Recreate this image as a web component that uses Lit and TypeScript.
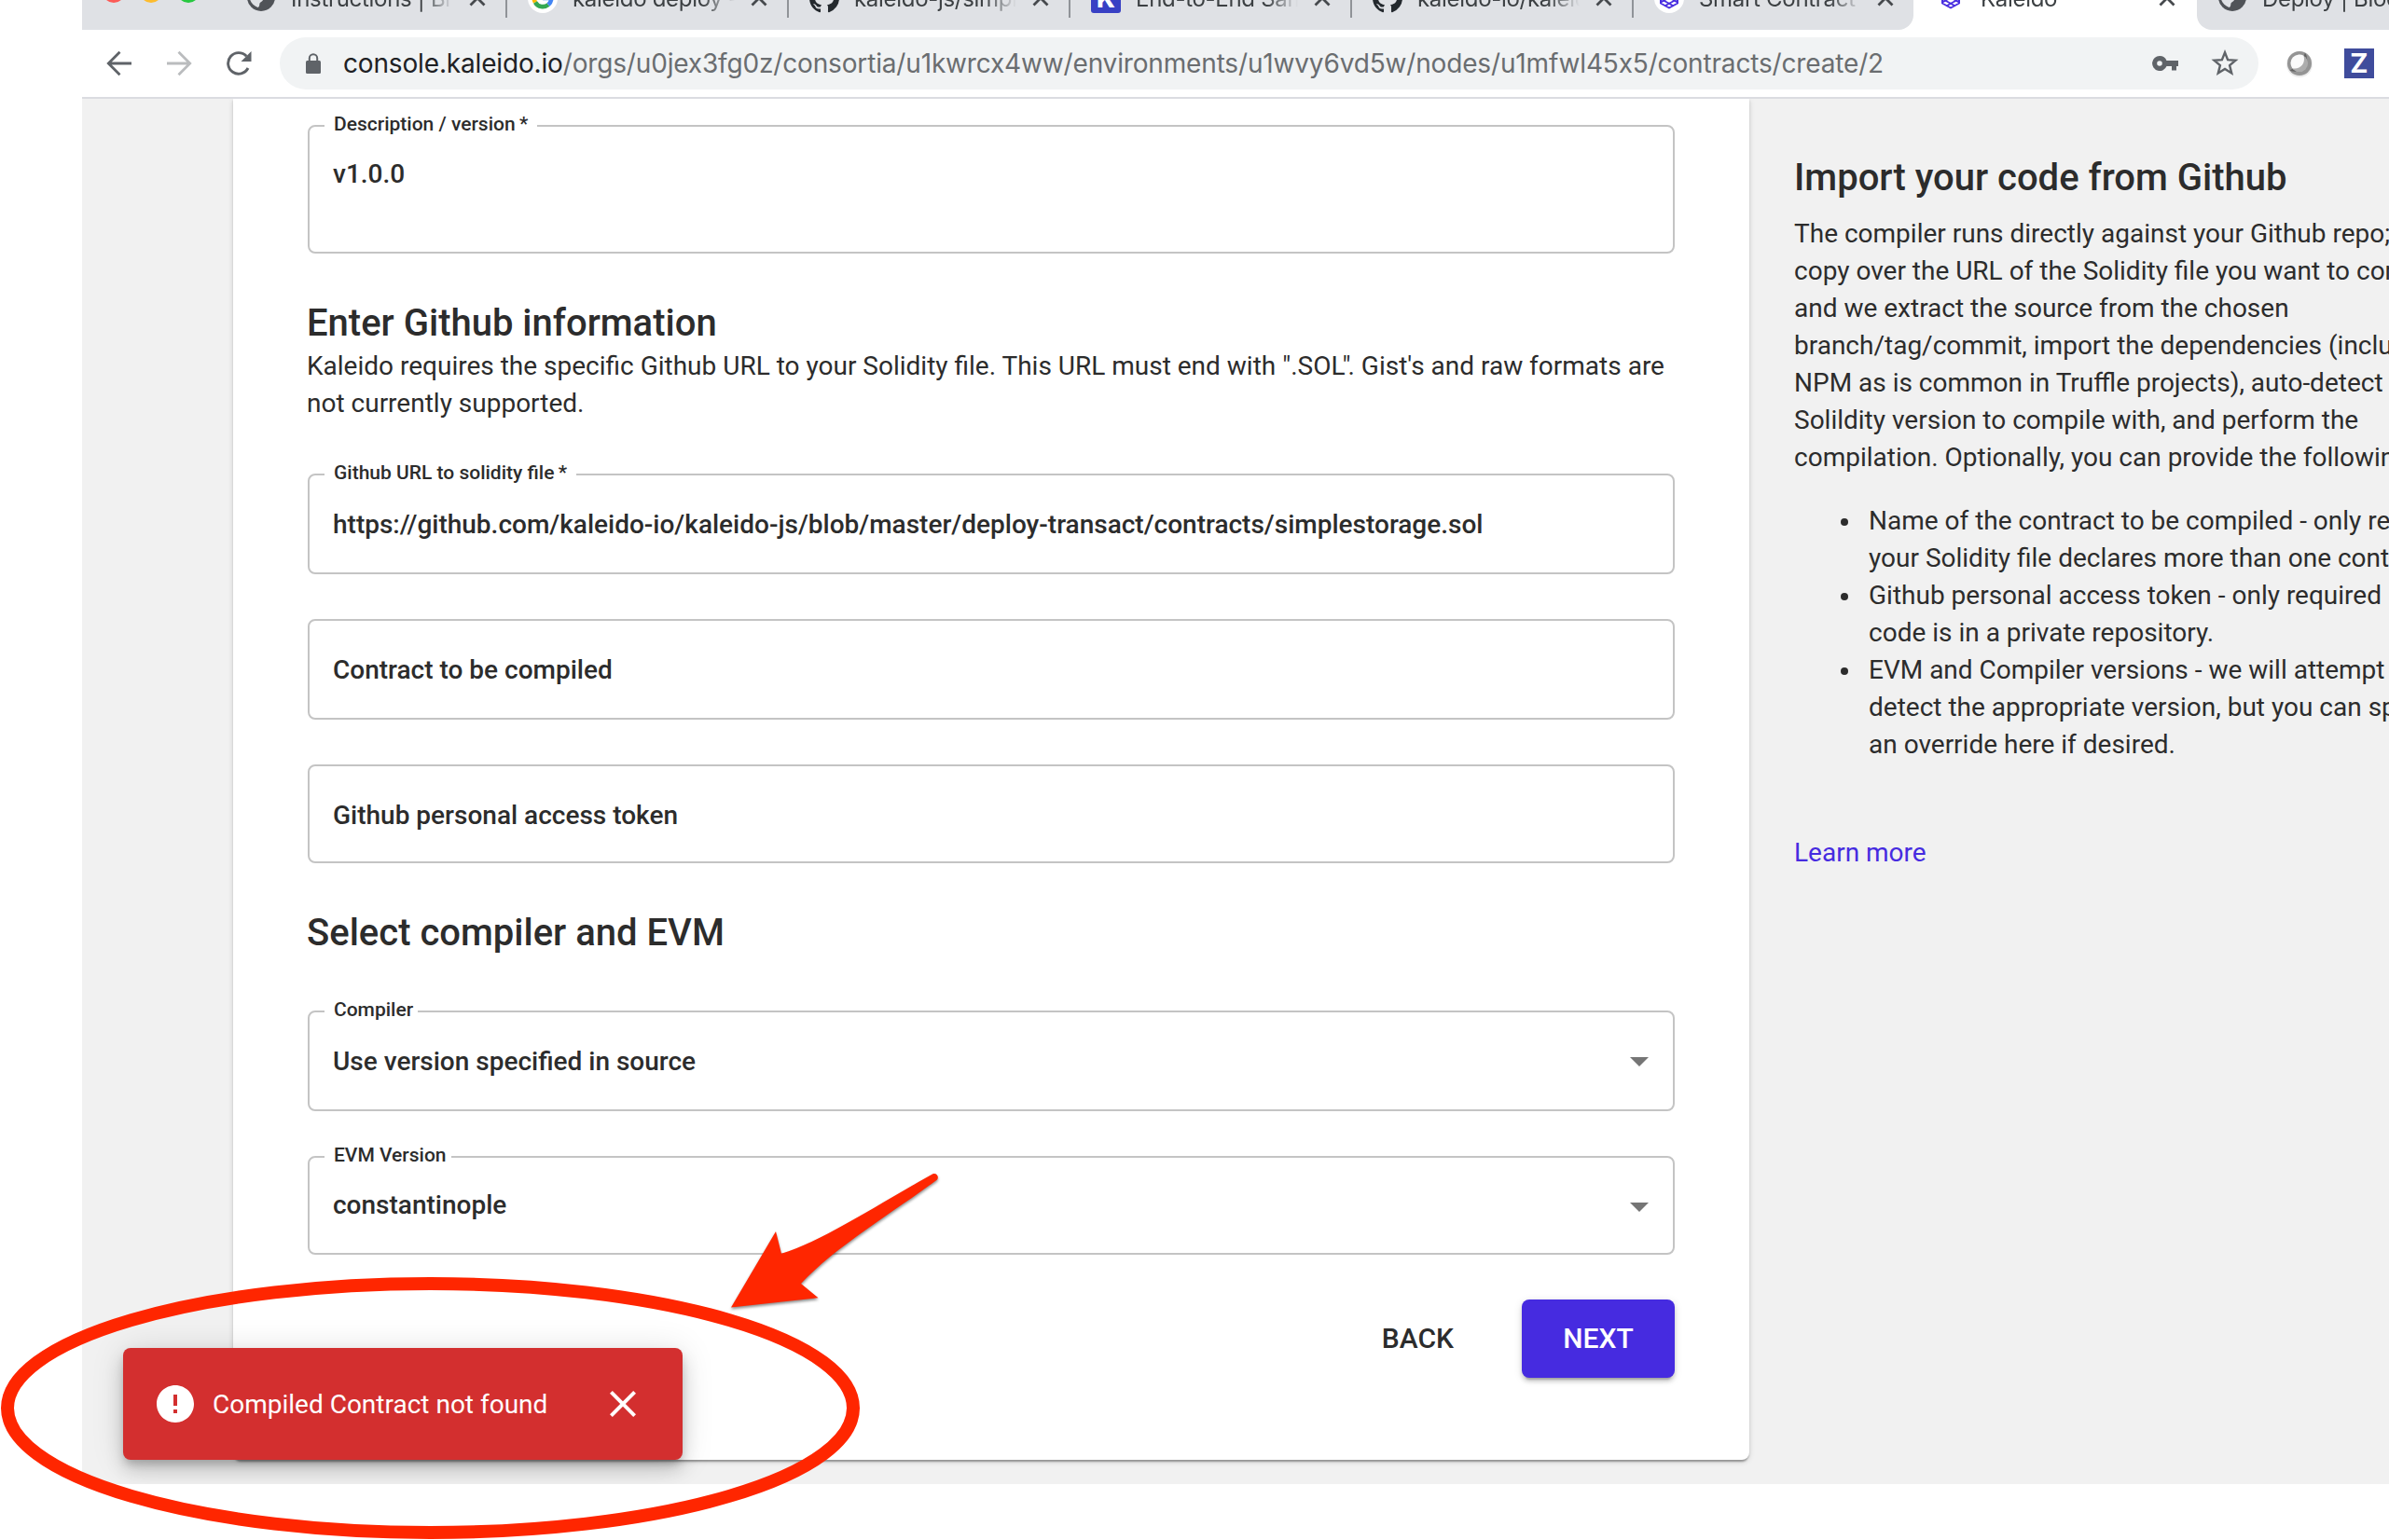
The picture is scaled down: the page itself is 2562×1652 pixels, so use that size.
import { LitElement, html, css, svg, nothing } from "lit";
import { customElement, property } from "lit/decorators.js";
import { classMap } from "lit/directives/class-map.js";

type TabIcon = "globe" | "google" | "github" | "k" | "kaleido" | "kaleidoBadge";

interface Tab {
  icon: TabIcon;
  title: string;
  active?: boolean;
}

const TABS: Tab[] = [
  { icon: "globe", title: "Instructions | Bl" },
  { icon: "google", title: "kaleido deploy -" },
  { icon: "github", title: "kaleido-js/simpl" },
  { icon: "k", title: "End-to-End Sam" },
  { icon: "github", title: "kaleido-io/kaleid" },
  { icon: "kaleidoBadge", title: "Smart Contract" },
  { icon: "kaleido", title: "Kaleido", active: true },
  { icon: "globe", title: "Deploy | Block" },
];

const knot = svg`
  <g fill="none" stroke="#4a2fe0" stroke-width="2" stroke-linejoin="round" stroke-linecap="round">
    <path d="M16 5.500 L25 10.500 V21.500 L16 26.500 L7 21.500 V10.500 Z"/>
    <path d="M11 8.500 V19 L20 24"/>
    <path d="M21 8.500 V19 L12 24"/>
    <path d="M7.500 20 L16 15.500 L24.500 20"/>
  </g>`;

const ICONS: Record<TabIcon, unknown> = {
  globe: svg`
    <circle cx="16" cy="15" r="15" fill="#505358"/>
    <path d="M3.500 11 C8 11 12 12 15 14 C17 15.500 18.500 16 18 18 C17.500 20 15.500 19.500 14.500 21.500 C14 23.500 14.500 25 12.500 26 C7 24 3.500 19 3.500 14 Z M19 3 C25 5 28.500 10 28 16 C26 16.500 25 14 22.500 14.500 C20 15 19 13 19.500 10.500 Z" fill="#dfe1e5"/>`,
  google: svg`
    <circle cx="16" cy="16" r="16" fill="#fff"/>
    <g fill="none" stroke-width="4.600">
      <path d="M22.500 9.500 A9.300 9.300 0 0 0 8 11.500" stroke="#ea4335"/>
      <path d="M8 11.500 A9.300 9.300 0 0 0 8 20.500" stroke="#fbbc05"/>
      <path d="M8 20.500 A9.300 9.300 0 0 0 22 23" stroke="#34a853"/>
      <path d="M22 23 A9.300 9.300 0 0 0 25.300 16 H16" stroke="#4285f4"/>
    </g>`,
  github: svg`
    <path transform="scale(2)" fill="#24292e" d="M8 0C3.580 0 0 3.580 0 8c0 3.540 2.290 6.530 5.470 7.590.4.070.550-.170.550-.380 0-.190-.010-.820-.010-1.490-2.010.370-2.530-.490-2.690-.940-.090-.230-.480-.940-.820-1.130-.280-.150-.680-.520-.010-.530.630-.010 1.080.580 1.230.820.720 1.210 1.870.870 2.330.660.070-.520.280-.870.510-1.070-1.780-.2-3.640-.890-3.640-3.950 0-.870.310-1.590.820-2.150-.080-.2-.360-1.020.080-2.120 0 0 .670-.210 2.200.820.640-.180 1.320-.270 2-.270s1.360.090 2 .270c1.530-1.040 2.200-.820 2.200-.820.440 1.100.160 1.920.080 2.120.510.560.820 1.270.820 2.150 0 3.070-1.870 3.750-3.650 3.950.290.250.540.730.540 1.480 0 1.070-.010 1.930-.010 2.200 0 .210.150.460.550.380A8.010 8.010 0 0 0 16 8c0-4.420-3.580-8-8-8z"/>`,
  k: svg`
    <rect width="32" height="32" rx="3" fill="#3840c4"/>
    <text x="16" y="26" text-anchor="middle" font-family="Inter, sans-serif" font-weight="800" font-size="27" fill="#fff">K</text>`,
  kaleido: knot,
  kaleidoBadge: svg`<circle cx="16" cy="16" r="16" fill="#fff"/>${knot}`,
};

@customElement("browser-tab")
export class BrowserTab extends LitElement {
  @property({ attribute: false }) tab!: Tab;

  static styles = css`
    :host { display: block; flex: none; width: 302px; }
    .tab {
      box-sizing: border-box; height: 68px; display: flex; align-items: center;
      padding-left: 22px; background: #dfe1e5;
    }
    .active { background: #fff; }
    .icon { width: 32px; height: 32px; flex: none; }
    .title {
      margin-left: 16px; padding-top: 1px; width: 177px; overflow: hidden; white-space: nowrap;
      font: 400 24px/32px Inter, sans-serif; letter-spacing: -0.3px; color: #3c4043;
      -webkit-mask-image: linear-gradient(90deg, #000 140px, transparent 174px);
      mask-image: linear-gradient(90deg, #000 140px, transparent 174px);
    }
    .close { width: 22px; height: 22px; margin-left: 12px; flex: none; }
  `;

  render() {
    const t = this.tab;
    return html`
      <div class=${classMap({ tab: true, active: !!t.active })}>
        <svg class="icon" viewBox="0 0 32 32">${ICONS[t.icon]}</svg>
        <span class="title">${t.title}</span>
        <svg class="close" viewBox="0 0 22 22">
          <path d="M3.500 3.500 L18.500 18.500 M18.500 3.500 L3.500 18.500" stroke="#46494d" stroke-width="2.800" fill="none"/>
        </svg>
      </div>`;
  }
}

@customElement("form-field")
export class FormField extends LitElement {
  @property() label = "";
  @property() value = "";
  @property({ type: Boolean }) required = false;
  @property({ type: Boolean }) select = false;

  static styles = css`
    :host {
      display: flex; box-sizing: border-box; position: relative; height: 108px;
      border: 2px solid #c4c4c4; border-radius: 8px; padding: 33px 26px 0 25px;
      justify-content: space-between; align-items: flex-start;
      font-family: Roboto, sans-serif; font-weight: 500; color: #2c2c2c;
    }
    .label {
      position: absolute; top: -15px; left: 16px; padding: 0 5px 0 10px;
      background: #fff; font-size: 21px; line-height: 24px; white-space: nowrap;
    }
    .required { padding-right: 10px; }
    .value { font-size: 28px; line-height: 40px; white-space: nowrap; }
    .arrow { width: 20px; height: 10px; margin-top: var(--arrow-top, 15px); }
  `;

  render() {
    return html`
      ${this.label
        ? html`<span class=${classMap({ label: true, required: this.required })}>${this.label}${this.required ? "\u2009*" : ""}</span>`
        : nothing}
      <span class="value">${this.value}</span>
      ${this.select
        ? html`<svg class="arrow" viewBox="0 0 20 10"><path d="M0 0 H20 L10 10 Z" fill="#757575"/></svg>`
        : nothing}
    `;
  }
}

@customElement("app-root")
export class AppRoot extends LitElement {
  static styles = css`
    :host {
      display: block; position: relative; width: 2562px; height: 1652px; overflow: hidden;
      background: #fff; font-family: Roboto, sans-serif; color: #2c2c2c;
    }
    .window {
      position: relative; margin-left: 88px; height: 1592px; overflow: hidden;
      display: flex; flex-direction: column; background: #f1f1f1;
    }

    .tabs { height: 32px; flex: none; display: flex; align-items: flex-end; overflow: hidden; background: #fff; }
    .lights {
      box-sizing: border-box; width: 154px; height: 68px; flex: none; background: #dfe1e5;
      display: flex; align-items: center; gap: 16px; padding: 0 0 14px 22px;
    }
    .light { width: 24px; height: 24px; border-radius: 50%; }
    .red { background: #fc5b57; }
    .yellow { background: #fdbc2e; }
    .green { background: #27c840; }
    .tab { display: flex; align-items: center; position: relative; height: 68px; flex: none; overflow: hidden; }
    .divided::after {
      content: ""; position: absolute; right: 0; top: 13px; width: 2px; height: 42px; background: #909398;
    }
    .before-active { border-bottom-right-radius: 16px; width: 300px; margin-right: 2px; }
    .after-active { border-bottom-left-radius: 16px; }

    .toolbar {
      box-sizing: border-box; height: 74px; flex: none; display: flex; align-items: center;
      padding-left: 8px; background: #fff; border-bottom: 2px solid #dbdce1;
    }
    .nav { width: 64px; height: 40px; flex: none; }
    .omnibox {
      box-sizing: border-box; width: 2122px; height: 56px; margin-left: 12px; flex: none;
      display: flex; align-items: center; padding: 0 20px 0 28px; border-radius: 28px; background: #f1f3f4;
    }
    .lock { width: 16px; height: 22px; flex: none; }
    .url {
      margin-left: 24px; flex: 1; font: 400 28px/40px Inter, sans-serif; letter-spacing: -0.16px;
      white-space: nowrap; color: #6a6d70;
    }
    .domain { color: #202124; }
    .key { width: 30px; height: 18px; margin-right: 33px; }
    .star { width: 32px; height: 30px; }
    .orb { width: 32px; height: 32px; margin-left: 28px; flex: none; }
    .zext {
      width: 32px; height: 32px; margin-left: 32px; flex: none; background: #3f4c9c; color: #fff;
      font: 700 29px/32px Inter, sans-serif; text-align: center;
    }

    .page { flex: 1; display: flex; align-items: flex-start; padding-left: 162px; overflow: hidden; }
    .card {
      box-sizing: border-box; width: 1626px; height: 1460px; flex: none; display: flex; flex-direction: column;
      padding: 28px 80px 0 79px; background: #fff; border-radius: 0 0 8px 8px;
      box-shadow: 0 4px 2px -2px rgba(0, 0, 0, 0.2), 0 2px 2px rgba(0, 0, 0, 0.16), 0 2px 6px rgba(0, 0, 0, 0.14);
    }
    form-field { margin: 48px 0 0 1px; }
    .first { margin-top: 0; height: 138px; padding-top: 31px; }
    .after-text { margin-top: 55px; }
    .after-heading { margin-top: 59px; }
    .short { height: 106px; }
    .high { padding-top: 31px; --arrow-top: 17px; }
    .heading { margin: 51px 0 0; font-size: 40px; line-height: 48px; font-weight: 500; white-space: nowrap; }
    .text { margin: 2px 0 0; font-size: 28px; line-height: 40px; white-space: nowrap; }
    .kern { letter-spacing: -3px; }
    .actions { display: flex; justify-content: flex-end; align-items: center; gap: 73px; margin-top: 48px; }
    .btn { font-size: 30px; line-height: 84px; font-weight: 500; }
    .primary {
      width: 164px; border-radius: 8px; background: #462be0; color: #fff; text-align: center;
      box-shadow: 0 6px 2px -4px rgba(0, 0, 0, 0.2), 0 4px 4px rgba(0, 0, 0, 0.14), 0 2px 10px rgba(0, 0, 0, 0.12);
    }

    .aside { padding: 61px 0 0 48px; flex: none; }
    .aside .heading { margin-top: 0; }
    .aside .text { margin-top: 16px; }
    .list { margin: 28px 0 0; padding-left: 80px; font-size: 28px; line-height: 40px; white-space: nowrap; list-style: none; }
    .list li::before {
      content: ""; display: inline-block; width: 8px; height: 8px; margin: 0 22px 0 -30px;
      border-radius: 50%; background: #2c2c2c; vertical-align: 4px;
    }
    .more { display: block; margin-top: 76px; font-size: 28px; line-height: 40px; color: #462be0; }

    .snackbar {
      position: absolute; left: 44px; top: 1446px; box-sizing: border-box; width: 600px; height: 120px;
      display: flex; align-items: center; padding: 0 40px 0 32px; border-radius: 8px;
      background: #d32f2f; color: #fff; font-size: 28px; line-height: 40px;
      box-shadow: 0 6px 10px -2px rgba(0, 0, 0, 0.2), 0 12px 20px rgba(0, 0, 0, 0.14), 0 2px 36px rgba(0, 0, 0, 0.12);
    }
    .glyph { width: 48px; height: 48px; flex: none; fill: #fff; }
    .message { flex: 1; margin-left: 16px; padding-top: 2px; white-space: nowrap; }

    .annotation { position: absolute; left: 0; top: 0; width: 2562px; height: 1652px; }
    .arrow { filter: drop-shadow(0 2px 1.5px rgba(0, 0, 0, 0.45)); }
  `;

  private tabClasses(i: number) {
    const active = TABS.findIndex((t) => t.active);
    return classMap({
      tab: true,
      divided: i < active - 1,
      "before-active": i === active - 1,
      "after-active": i === active + 1,
    });
  }

  render() {
    return html`
      <div class="window">
        <div class="tabs">
          <div class="lights">
            <span class="light red"></span><span class="light yellow"></span><span class="light green"></span>
          </div>
          ${TABS.map((t, i) => html`<div class=${this.tabClasses(i)}><browser-tab .tab=${t}></browser-tab></div>`)}
        </div>

        <div class="toolbar">
          <svg class="nav" viewBox="0 0 64 40" fill="none" stroke="#5f6368" stroke-width="2.800">
            <path d="M45 20 H20.500 M32.500 7.800 L20.300 20 L32.500 32.200"/>
          </svg>
          <svg class="nav" viewBox="0 0 64 40" fill="none" stroke="#babcbe" stroke-width="2.800">
            <path d="M19 20 H43.500 M31.500 7.800 L43.700 20 L31.500 32.200"/>
          </svg>
          <svg class="nav" viewBox="0 0 64 40">
            <path d="M42 25 A11.300 11.300 0 1 1 40.300 12.300" fill="none" stroke="#5f6368" stroke-width="2.900"/>
            <path d="M45.500 7 V18 H34.500 Z" fill="#5f6368"/>
          </svg>
          <div class="omnibox">
            <svg class="lock" viewBox="0 0 16 22">
              <rect x="0" y="8" width="16" height="14" rx="1.500" fill="#5f6368"/>
              <path d="M3.800 9 V5.500 A4.200 4.200 0 0 1 12.200 5.500 V9" fill="none" stroke="#5f6368" stroke-width="2"/>
            </svg>
            <span class="url"><span class="domain">console.kaleido.io</span>/orgs/u0jex3fg0z/consortia/u1kwrcx4ww/environments/u1wvy6vd5w/nodes/u1mfwl45x5/contracts/create/2</span>
            <svg class="key" viewBox="0 0 30 18">
              <path fill="#5f6368" fill-rule="evenodd" d="M9 1 A8 8 0 1 0 16.500 12 H22 V16.500 H27 V12 H29 V6 H16.500 A8 8 0 0 0 9 1 Z M9 6.200 A2.800 2.800 0 1 1 9 11.800 A2.800 2.800 0 1 1 9 6.200 Z"/>
            </svg>
            <svg class="star" viewBox="0 0 32 30">
              <path d="M16 3.300 L19.100 11.100 L27.500 11.700 L21.100 17.100 L23.200 25.400 L16 20.900 L8.800 25.400 L10.900 17.100 L4.500 11.700 L12.900 11.100 Z" fill="none" stroke="#5f6368" stroke-width="2.400"/>
            </svg>
          </div>
          <svg class="orb" viewBox="0 0 32 32">
            <circle cx="16" cy="17" r="14" fill="#ececec"/>
            <circle cx="16" cy="16" r="13" fill="#949494"/>
            <path d="M22 4.500 A13 13 0 0 1 5.500 23.500 L9 21.500 A9.500 9.500 0 0 0 20.500 8.500 Z" fill="#636363"/>
            <circle cx="15.800" cy="15.800" r="9.300" fill="#adadad"/>
            <path d="M20.500 7.800 A9.300 9.300 0 0 0 8.300 21.300 C16 23 23 17 20.500 7.800 Z" fill="#fafafa"/>
          </svg>
          <div class="zext">Z</div>
        </div>

        <div class="page">
          <div class="card">
            <form-field class="first" label="Description / version" value="v1.0.0" required></form-field>
            <h2 class="heading">Enter Github information</h2>
            <p class="text">Kaleido requires the specific Github URL to your Solidity file. This URL must end with ".SO<span class="kern">L"</span>. Gist's and raw formats are<br />not currently supported.</p>
            <form-field class="after-text" label="Github URL to solidity file" required
              value="https://github.com/kaleido-io/kaleido-js/blob/master/deploy-transact/contracts/simplestorage.sol"></form-field>
            <form-field value="Contract to be compiled"></form-field>
            <form-field class="short" value="Github personal access token"></form-field>
            <h2 class="heading">Select compiler and EVM</h2>
            <form-field class="after-heading" label="Compiler" value="Use version specified in source" select></form-field>
            <form-field class="short high" label="EVM Version" value="constantinople" select></form-field>
            <div class="actions">
              <span class="btn">BACK</span>
              <span class="btn primary">NEXT</span>
            </div>
          </div>

          <div class="aside">
            <h2 class="heading">Import your code from Github</h2>
            <p class="text">The compiler runs directly against your Github repo;<br />copy over the URL of the Solidity file you want to compile<br />and we extract the source from the chosen<br />branch/tag/commit, import the dependencies (including<br />NPM as is common in Truffle projects), auto-detect the<br />Solildity version to compile with, and perform the<br />compilation. Optionally, you can provide the following</p>
            <ul class="list">
              <li>Name of the contract to be compiled - only required<br />your Solidity file declares more than one contract</li>
              <li>Github personal access token - only required<br />code is in a private repository.</li>
              <li>EVM and Compiler versions - we will attempt<br />detect the appropriate version, but you can specify<br />an override here if desired.</li>
            </ul>
            <a class="more">Learn more</a>
          </div>
        </div>

        <div class="snackbar">
          <svg class="glyph" viewBox="0 0 24 24">
            <path d="M12 2C6.480 2 2 6.480 2 12s4.480 10 10 10 10-4.480 10-10S17.520 2 12 2zm1 15h-2v-2h2v2zm0-4h-2V7h2v6z"/>
          </svg>
          <span class="message">Compiled Contract not found</span>
          <svg class="glyph" viewBox="0 0 24 24">
            <path d="M19 6.410L17.590 5 12 10.590 6.410 5 5 6.410 10.590 12 5 17.590 6.410 19 12 13.410 17.590 19 19 17.590 13.410 12z"/>
          </svg>
        </div>
      </div>

      <svg class="annotation" viewBox="0 0 2562 1652">
        <ellipse cx="461.500" cy="1510.500" rx="453.500" ry="133.500" fill="none" stroke="#ff2600" stroke-width="14"/>
        <path class="arrow" fill="#ff2600" d="M784 1402.500 L832 1321 L838 1344.700 C880 1332 930 1299 1000 1259.500 C1004 1257.500 1007.500 1262 1005 1265.500 C960 1299 895 1338 859 1377 L877.500 1392.300 Z"/>
      </svg>
    `;
  }
}
